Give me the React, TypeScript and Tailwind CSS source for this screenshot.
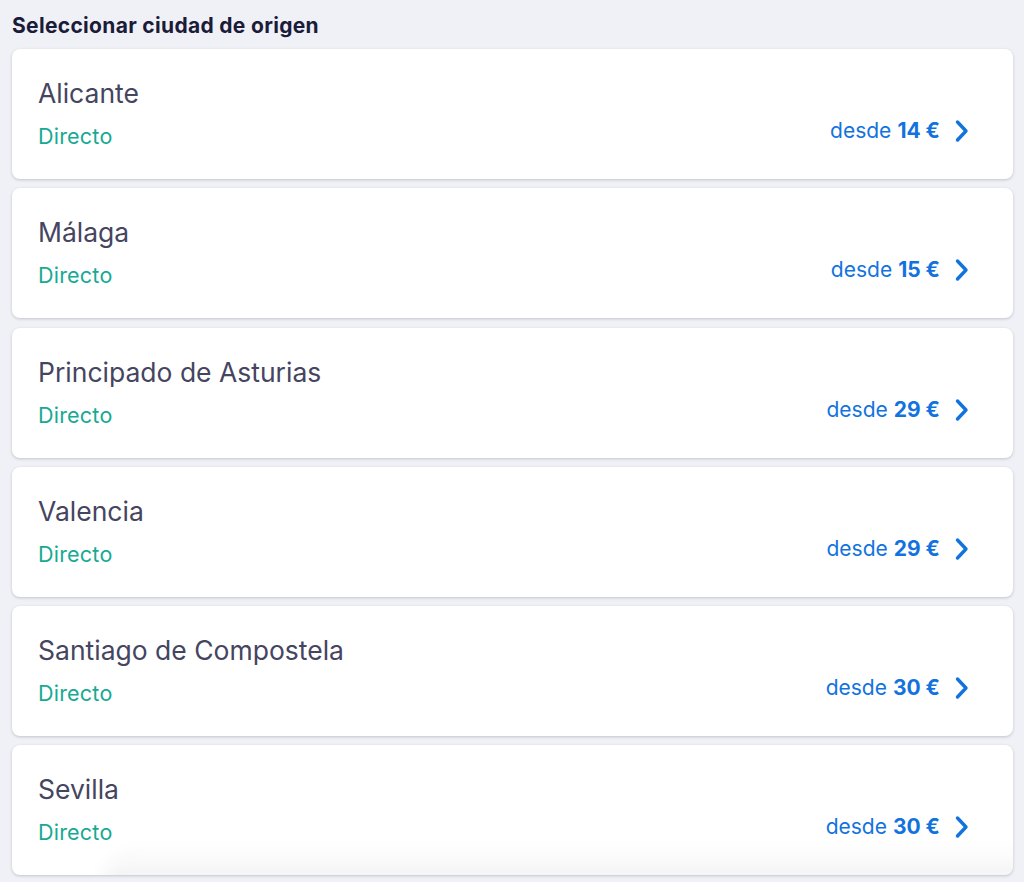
import React from "react";

const routes = [
  { city: "Alicante", price: 14 },
  { city: "Málaga", price: 15 },
  { city: "Principado de Asturias", price: 29 },
  { city: "Valencia", price: 29 },
  { city: "Santiago de Compostela", price: 30 },
  { city: "Sevilla", price: 30 },
];

const Chevron = () => (
  <svg width="16" height="24" viewBox="0 0 16 24" fill="none" className="ml-[14px]">
    <path d="M3.5 3l8.5 9-8.5 9" stroke="#1273de" strokeWidth="3.4" strokeLinecap="round" strokeLinejoin="round" />
  </svg>
);

const App = () => {
  return (
    <div
      className="min-h-[882px] bg-[#f0f1f6] px-3 pt-[13px]"
      style={{ fontFamily: "Inter, 'Noto Sans', sans-serif" }}
    >
      <h2 className="text-[21px] leading-[26px] font-bold tracking-[0.015em] text-[#1b1b3a] mb-[10px]">
        Seleccionar ciudad de origen
      </h2>
      <div className="flex flex-col gap-[9.3px]">
        {routes.map((r, i) => (
          <button
            key={r.city}
            className="relative w-[1001px] h-[130px] bg-white rounded-lg shadow-[0_1px_3px_rgba(30,30,60,0.22)] flex items-start justify-between pl-[26px] pr-[43px] pt-[28px] text-left overflow-hidden"
          >
            <div className="flex flex-col">
              <span className="text-[26.5px] leading-[32px] text-[#45455f]">{r.city}</span>
              <span className="text-[21.5px] leading-[28px] tracking-[0.01em] text-[#17a994] mt-[13px]">Directo</span>
            </div>
            <div className="flex items-center text-[21px] leading-[28px] text-[#1273de] mt-[40px]">
              <span>desde</span>
              <span className="font-bold ml-[6px]">{r.price} €</span>
              <Chevron />
            </div>
            {i === routes.length - 1 && (
              <div className="absolute left-[90px] right-[-20px] bottom-[-14px] h-[44px] bg-gradient-to-b from-transparent to-[rgba(30,30,60,0.07)] rounded-tl-[60px] blur-[8px]" />
            )}
          </button>
        ))}
      </div>
    </div>
  );
};

export default App;
